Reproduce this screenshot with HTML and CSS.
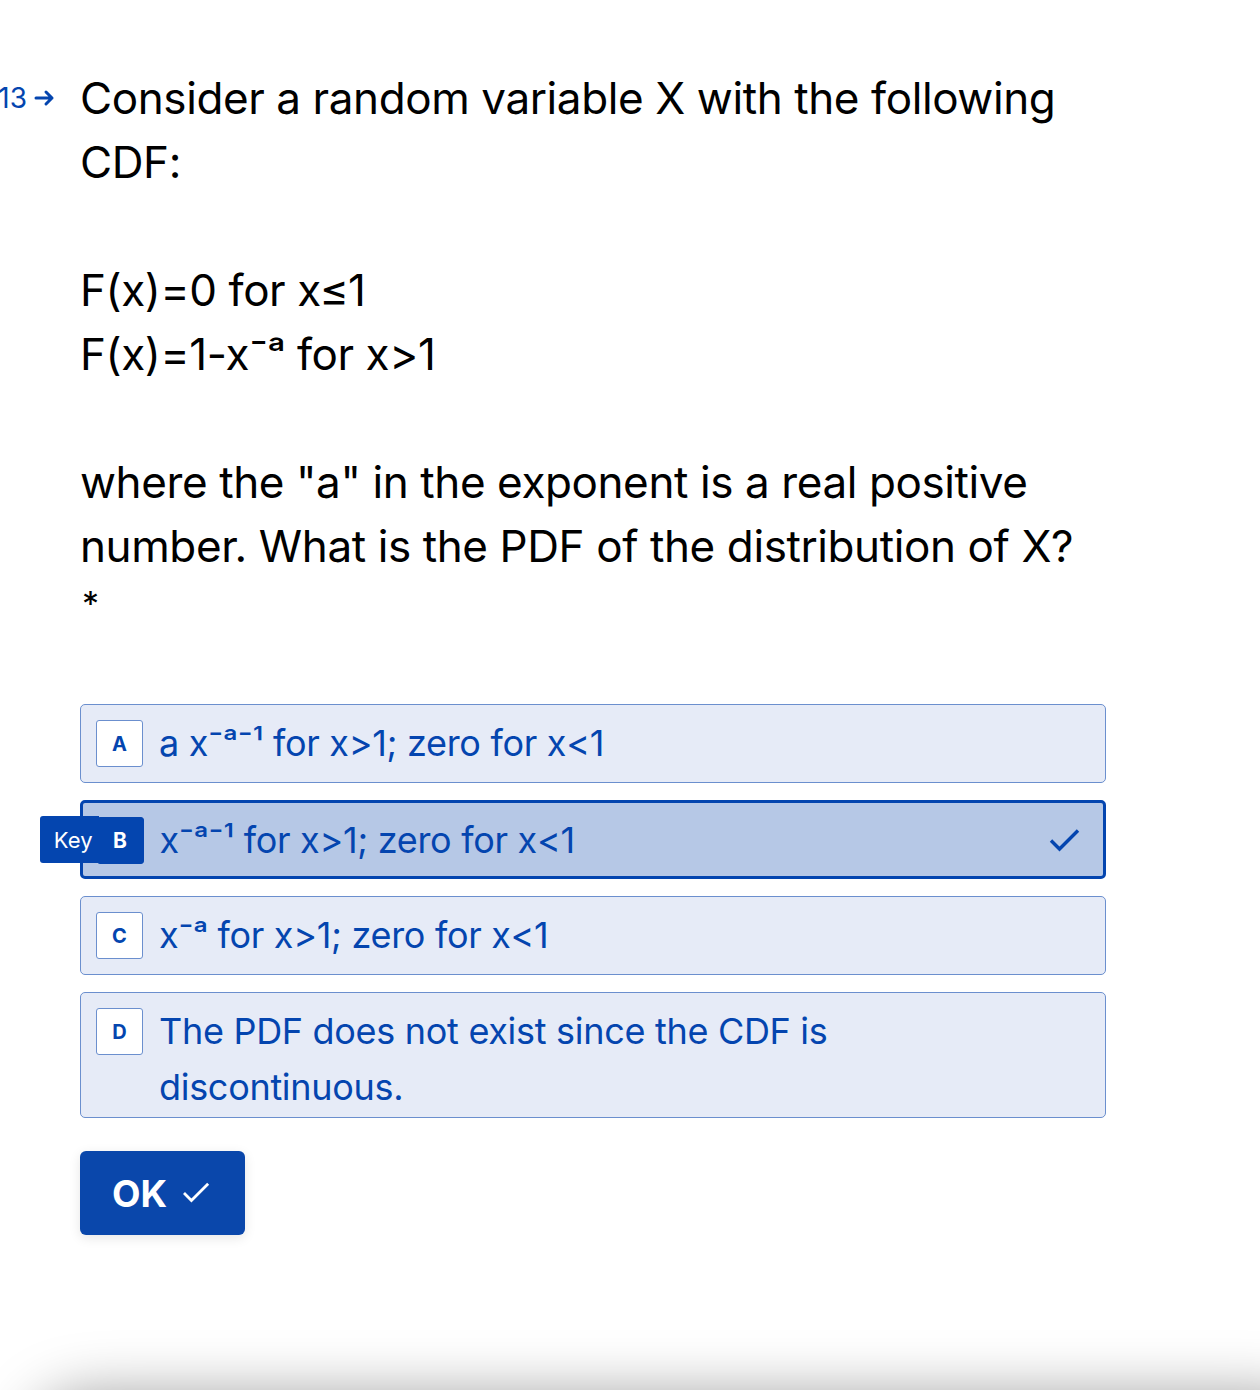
FILE: index.html
```html
<!DOCTYPE html>
<html lang="en">
<head>
<meta charset="utf-8">
<title>Question 13</title>
<link rel="stylesheet" href="styles.css">
</head>
<body>
<main class="page">
  <section class="question">
    <div class="qnum">
      <span class="qnum-text">13</span>
      <svg class="qnum-arrow" width="22" height="20" viewBox="0 0 22 20"><path d="M2 10h16M12 4l6 6-6 6" fill="none" stroke="currentColor" stroke-width="3" stroke-linecap="round" stroke-linejoin="round"/></svg>
    </div>
    <div class="qbody">
      <p class="qtext">Consider a random variable X with the following CDF:<br><br>F(x)=0 for x≤1<br>F(x)=1-x⁻ᵃ for x&gt;1<br><br>where the "a" in the exponent is a real positive number. What is the PDF of the distribution of X?</p>
      <div class="required">*</div>
      <ul class="options">
        <li class="option">
          <span class="letter">A</span>
          <span class="opt-text">a x⁻ᵃ⁻¹ for x&gt;1; zero for x&lt;1</span>
        </li>
        <li class="option selected">
          <span class="letter key"><span class="key-label">Key</span>B</span>
          <span class="opt-text">x⁻ᵃ⁻¹ for x&gt;1; zero for x&lt;1</span>
          <svg class="tick" width="34" height="28" viewBox="0 0 34 28"><path d="M3 14.5l8.5 8.5L30 4.5" fill="none" stroke="currentColor" stroke-width="3.4"/></svg>
        </li>
        <li class="option">
          <span class="letter">C</span>
          <span class="opt-text">x⁻ᵃ for x&gt;1; zero for x&lt;1</span>
        </li>
        <li class="option">
          <span class="letter">D</span>
          <span class="opt-text">The PDF does not exist since the CDF is discontinuous.</span>
        </li>
      </ul>
      <button class="ok">OK
        <svg class="ok-tick" width="34" height="28" viewBox="0 0 34 28"><path d="M3 14l8 8L29 4" fill="none" stroke="currentColor" stroke-width="3"/></svg>
      </button>
    </div>
  </section>
  <div class="bottom-bar"></div>
</main>
</body>
</html>
```

FILE: styles.css
```css
html, body {
  margin: 0;
  padding: 0;
  background: #ffffff;
}
body {
  font-family: Inter, "Liberation Sans", sans-serif;
  color: #000000;
  overflow: hidden;
  height: 1390px;
}
.page {
  position: relative;
  height: 1390px;
  overflow: hidden;
}
.question {
  display: flex;
  padding-top: 66px;
}
.qnum {
  flex: none;
  width: 80px;
  box-sizing: border-box;
  padding-right: 24px;
  display: flex;
  justify-content: flex-end;
  align-items: center;
  height: 64px;
  gap: 7px;
  color: #0445af;
}
.qnum-text {
  font-size: 28px;
  white-space: nowrap;
}
.qnum-arrow {
  flex: none;
  width: 22px;
  height: 20px;
}
.qbody {
  width: 1026px;
}
.qtext {
  margin: 0;
  font-size: 44px;
  line-height: 64px;
  letter-spacing: -0.4px;
  width: 1010px;
}
.required {
  font-size: 34px;
  line-height: 40px;
  height: 40px;
  padding-top: 6px;
  padding-left: 2px;
}
.options {
  list-style: none;
  margin: 80px 0 0;
  padding: 0;
  display: flex;
  flex-direction: column;
  gap: 17px;
}
.option {
  position: relative;
  display: flex;
  align-items: flex-start;
  box-sizing: border-box;
  min-height: 79px;
  padding: 10px 14px 2px 15px;
  background: #e6ebf7;
  border: 1.5px solid #6b8fce;
  border-radius: 5px;
  color: #0445af;
}
.option.selected {
  background: #b6c8e6;
  border: 3px solid #0445af;
  padding: 8.5px 12.5px 0.5px 13.5px;
}
.letter {
  flex: none;
  width: 47px;
  height: 47px;
  margin-top: 5px;
  box-sizing: border-box;
  border: 1.5px solid #6b8fce;
  border-radius: 3px;
  background: #ffffff;
  display: flex;
  align-items: center;
  justify-content: center;
  font-weight: 700;
  font-size: 20px;
  color: #0445af;
}
.letter.key {
  position: relative;
  background: #0445af;
  color: #ffffff;
  border-color: #0445af;
  font-size: 21px;
}
.key-label {
  position: absolute;
  right: 44px;
  top: -1.5px;
  height: 47px;
  padding: 0 6px 0 14px;
  background: #0445af;
  border-radius: 3px 0 0 3px;
  display: flex;
  align-items: center;
  font-weight: 400;
  font-size: 22px;
}
.opt-text {
  flex: 1;
  max-width: 850px;
  margin-left: 16px;
  font-size: 36px;
  line-height: 56px;
  letter-spacing: -0.3px;
}
.tick {
  flex: none;
  align-self: center;
  color: #0445af;
  margin-left: auto;
  margin-right: 9px;
  margin-bottom: 8px;
}
.ok {
  margin-top: 33px;
  width: 165px;
  height: 84px;
  border: none;
  border-radius: 6px;
  background: #0a47ab;
  color: #ffffff;
  font-family: Inter, "Liberation Sans", sans-serif;
  font-weight: 700;
  font-size: 37px;
  display: flex;
  align-items: center;
  justify-content: center;
  gap: 14px;
  padding: 0;
  box-shadow: 0 3px 12px rgba(0, 0, 0, 0.1);
}
.ok-tick {
  width: 32px;
  height: 26px;
}
.bottom-bar {
  position: absolute;
  left: 30px;
  top: 1396px;
  width: 1300px;
  height: 200px;
  border-radius: 60px;
  background: #ffffff;
  box-shadow: 0 0 60px rgba(0, 0, 0, 0.4);
}
```
